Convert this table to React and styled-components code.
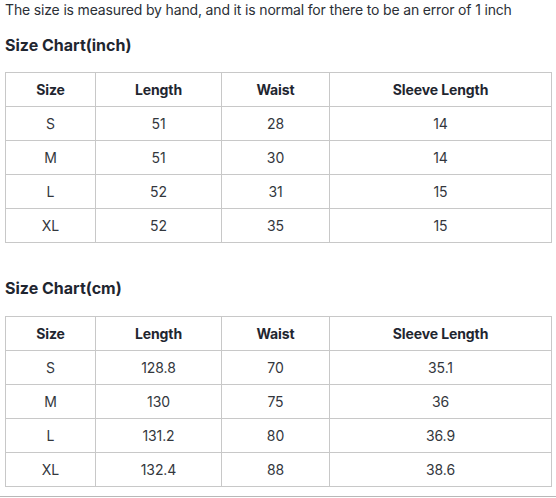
import React from 'react';
import styled, {createGlobalStyle} from 'styled-components';

const GlobalStyle = createGlobalStyle`
  body {
    margin: 0;
    background: #ffffff;
    font-family: Inter, "Liberation Sans", sans-serif;
    color: #222831;
  }
`;

const Page = styled.div`
  padding: 0 5px 9px;
  border-bottom: 1px solid #b8b8b8;
`;

const Note = styled.p`
  margin: 0;
  font-size: 14px;
  line-height: 20px;
  letter-spacing: -0.16px;
  color: #2b2f36;
`;

const Heading = styled.h3`
  margin: ${props => (props.first ? '13px' : '33px')} 0 ${props => (props.first ? '15px' : '16px')};
  font-size: 16px;
  line-height: 24px;
  font-weight: 700;
  color: #1f2630;
`;

const Table = styled.table`
  width: 546px;
  border-collapse: collapse;
  table-layout: fixed;
  font-size: 14px;
`;

const Cell = styled.td`
  height: 33px;
  padding: 0;
  border: 1px solid #c8c8c8;
  text-align: center;
  vertical-align: middle;
  color: #33373d;
  letter-spacing: -0.1px;
`;

const HeadCell = styled(Cell).attrs({as: 'th'})`
  font-weight: 700;
  color: #1f2630;
`;

const columns = [
  {label: 'Size', width: 90},
  {label: 'Length', width: 126},
  {label: 'Waist', width: 108},
  {label: 'Sleeve Length', width: 222},
];

const inchRows = [
  ['S', '51', '28', '14'],
  ['M', '51', '30', '14'],
  ['L', '52', '31', '15'],
  ['XL', '52', '35', '15'],
];

const cmRows = [
  ['S', '128.8', '70', '35.1'],
  ['M', '130', '75', '36'],
  ['L', '131.2', '80', '36.9'],
  ['XL', '132.4', '88', '38.6'],
];

function SizeTable({rows}) {
  return (
    <Table>
      <colgroup>
        {columns.map(c => (
          <col key={c.label} style={{width: c.width}} />
        ))}
      </colgroup>
      <thead>
        <tr>
          {columns.map(c => (
            <HeadCell key={c.label}>{c.label}</HeadCell>
          ))}
        </tr>
      </thead>
      <tbody>
        {rows.map(row => (
          <tr key={row[0]}>
            {row.map((v, i) => (
              <Cell key={i}>{v}</Cell>
            ))}
          </tr>
        ))}
      </tbody>
    </Table>
  );
}

export default function App() {
  return (
    <Page>
      <GlobalStyle />
      <Note>The size is measured by hand, and it is normal for there to be an error of 1 inch</Note>
      <Heading first>Size Chart(inch)</Heading>
      <SizeTable rows={inchRows} />
      <Heading>Size Chart(cm)</Heading>
      <SizeTable rows={cmRows} />
    </Page>
  );
}
